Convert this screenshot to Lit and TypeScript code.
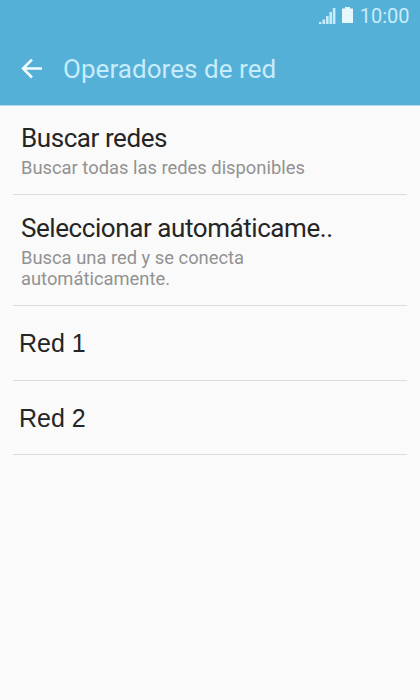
import { LitElement, html, css } from "lit";
import { customElement } from "lit/decorators.js";

interface Row {
  title: string;
  detail?: string[];
  kind: string;
}

const rows: Row[] = [
  { title: "Buscar redes", detail: ["Buscar todas las redes disponibles"], kind: "search" },
  {
    title: "Seleccionar automáticame..",
    detail: ["Busca una red y se conecta", "automáticamente."],
    kind: "auto",
  },
  { title: "Red 1", kind: "network" },
  { title: "Red 2", kind: "network" },
];

@customElement("app-root")
export class AppRoot extends LitElement {
  static styles = css`
    :host {
      display: block;
      width: 420px;
      height: 700px;
      overflow: hidden;
      background: #fafafa;
      font-family: Roboto, sans-serif;
      color: #252525;
    }
    .header {
      height: 106px;
      box-sizing: border-box;
      background: #54b0d6;
      border-bottom: 1px solid #b5dcec;
      color: #c8ecfb;
    }
    .status {
      height: 32px;
      display: flex;
      align-items: center;
      justify-content: flex-end;
      padding-right: 10.5px;
    }
    .status svg {
      display: block;
    }
    .battery {
      margin: 0 7px 2px 6px;
      color: #e6f7fd;
    }
    .time {
      font-size: 20px;
      line-height: 34px;
    }
    .bar {
      height: 73px;
      display: flex;
      align-items: center;
      padding-left: 21px;
      gap: 21px;
    }
    .back {
      color: #f4fcff;
    }
    .bar h1 {
      margin: 0;
      font-size: 26px;
      font-weight: 400;
      line-height: 30px;
      letter-spacing: 0.05px;
    }
    .list {
      padding: 0 13px;
    }
    .row {
      box-sizing: border-box;
      border-bottom: 1px solid #dcdcdc;
      padding-left: 8px;
    }
    .search {
      height: 89px;
      padding-top: 17px;
    }
    .auto {
      height: 111px;
      padding-top: 18px;
    }
    .title {
      font-size: 26px;
      line-height: 30px;
      letter-spacing: -0.43px;
      white-space: nowrap;
    }
    .detail {
      margin-top: 4px;
      font-size: 18.35px;
      line-height: 21px;
      color: #929292;
      white-space: nowrap;
    }
    .network {
      height: 74.5px;
      padding: 1px 0 0 6px;
      display: flex;
      align-items: center;
    }
    .network .title {
      font-family: "Liberation Sans", sans-serif;
      font-size: 25px;
      letter-spacing: 0;
    }
  `;

  render() {
    return html`
      <header class="header">
        <div class="status">
          <svg width="17" height="16" viewBox="0 0 17 16" fill="currentColor">
            <path d="M0 14h2.500v2H0zM3.500 11.500h2.600V16H3.500zM7 8h2.600v8H7zM10.400 4h2.600v12h-2.600zM13.800 0h2.600v16h-2.600z" />
          </svg>
          <svg class="battery" width="11" height="16" viewBox="0 0 11 16" fill="currentColor">
            <path d="M3 0h5v1.500h3V16H0V1.500h3z" />
          </svg>
          <span class="time">10:00</span>
        </div>
        <div class="bar">
          <svg class="back" width="21" height="20" viewBox="0 0 21 20" fill="none" stroke="currentColor" stroke-width="2.5">
            <path d="M21 9.500H2M11 0.500L2 9.500l9 9" />
          </svg>
          <h1>Operadores de red</h1>
        </div>
      </header>
      <main class="list">
        ${rows.map(
          (row) => html`
            <section class="row ${row.kind}">
              <div class="title">${row.title}</div>
              ${row.detail
                ? html`<div class="detail">${row.detail.map((line) => html`<div>${line}</div>`)}</div>`
                : null}
            </section>
          `
        )}
      </main>
    `;
  }
}
